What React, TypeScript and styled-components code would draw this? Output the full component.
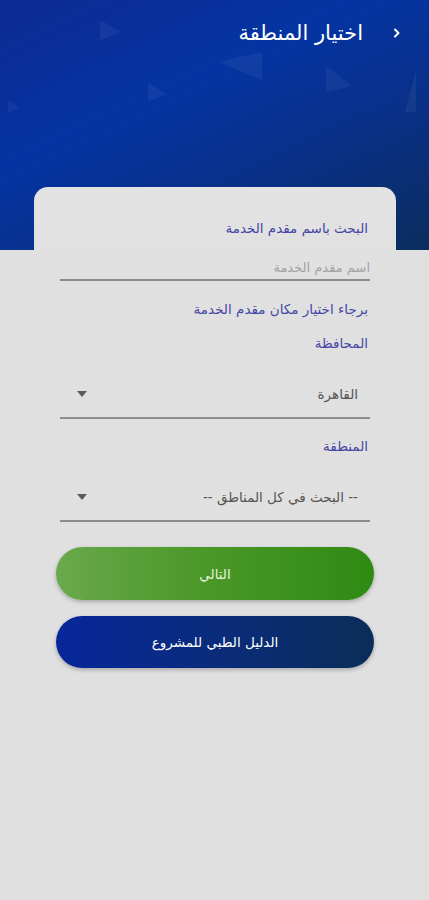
import styled, { createGlobalStyle } from "styled-components";

const GlobalStyle = createGlobalStyle`
  html, body {
    margin: 0;
    padding: 0;
    background: #e0e0e0;
  }
  body {
    font-family: "DejaVu Sans", "Noto Sans", sans-serif;
  }
  * {
    box-sizing: border-box;
  }
`;

const TRIANGLES = [
  "100,20 122,32 100,40",
  "218,62 262,52 262,80",
  "148,82 166,94 148,102",
  "326,66 352,86 326,92",
  "405,112 416,70 416,112",
  "8,100 20,108 8,112",
];

const Caret = () => (
  <svg width="10" height="6" viewBox="0 0 10 6">
    <path d="M0 0h10L5 6z" fill="#5a5a5a" />
  </svg>
);

const App = () => {
  return (
    <Page dir="rtl">
      <GlobalStyle />
      <Hero>
        <Shapes width="429" height="250" viewBox="0 0 429 250">
          {TRIANGLES.map((p) => (
            <polygon key={p} points={p} fill="#ffffff" opacity="0.05" />
          ))}
        </Shapes>
        <TopBar>
          <BackButton>
            <svg width="10" height="12" viewBox="0 0 10 12">
              <path
                d="M3 2.5l3.5 3.5L3 9.5"
                stroke="#fff"
                strokeWidth="2"
                fill="none"
                strokeLinecap="round"
                strokeLinejoin="round"
              />
            </svg>
          </BackButton>
          <Title>اختيار المنطقة</Title>
        </TopBar>
      </Hero>

      <Card>
        <Label>البحث باسم مقدم الخدمة</Label>
        <TextInput placeholder="اسم مقدم الخدمة" />
        <Label $gap={18}>برجاء اختيار مكان مقدم الخدمة</Label>
        <Label $gap={14}>المحافظة</Label>
        <Select>
          <SelectValue>القاهرة</SelectValue>
          <Caret />
        </Select>
        <Label $gap={17}>المنطقة</Label>
        <Select>
          <SelectValue>-- البحث في كل المناطق --</SelectValue>
          <Caret />
        </Select>
        <Button $variant="green" $gap={25}>
          التالي
        </Button>
        <Button $variant="blue" $gap={16}>
          الدليل الطبي للمشروع
        </Button>
      </Card>
    </Page>
  );
};

const Page = styled.div`
  min-height: 100vh;
  display: flex;
  flex-direction: column;
  background: #e0e0e0;
`;

const Hero = styled.header`
  position: relative;
  flex: none;
  height: 250px;
  background: linear-gradient(
    155deg,
    #0c2a93 0%,
    #0534a2 38%,
    #08318e 60%,
    #0b2d5e 100%
  );
  overflow: hidden;
`;

const Shapes = styled.svg`
  position: absolute;
  inset: 0;
`;

const TopBar = styled.div`
  position: relative;
  display: flex;
  align-items: center;
  height: 66px;
  padding: 0 26px 0 0;
`;

const BackButton = styled.span`
  display: flex;
  width: 12px;
  justify-content: center;
  margin-left: 28px;
`;

const Title = styled.h1`
  margin: 0;
  color: #ffffff;
  font-size: 21px;
  font-weight: 400;
`;

const Card = styled.main`
  position: relative;
  flex: 1;
  margin: -63px 33px 0 34px;
  padding: 31px 28px 40px 26px;
  background: linear-gradient(180deg, #e3e3e3 0px, #e0e0e0 90px);
  border-radius: 14px 14px 0 0;
  display: flex;
  flex-direction: column;
`;

const Label = styled.div<{ $gap?: number }>`
  margin-top: ${(p) => p.$gap ?? 0}px;
  color: #4646a6;
  font-size: 13.5px;
  line-height: 20px;
`;

const TextInput = styled.input`
  margin: 19px -2px 0 0;
  height: 24px;
  padding: 0 0 2px;
  border: none;
  border-bottom: 2px solid #8c8c8c;
  background: transparent;
  font-family: inherit;
  font-size: 13px;
  color: #444;
  outline: none;
  &::placeholder {
    color: #a3a3a3;
  }
`;

const Select = styled.div`
  margin: 18px -2px 0 0;
  height: 48px;
  display: flex;
  align-items: center;
  justify-content: space-between;
  padding: 0 12px 0 17px;
  border-bottom: 2px solid #8c8c8c;
`;

const SelectValue = styled.span`
  color: #555555;
  font-size: 13.5px;
`;

const Button = styled.button<{ $variant: "green" | "blue"; $gap: number }>`
  margin: ${(p) => p.$gap}px -6px 0 -4px;
  height: ${(p) => (p.$variant === "green" ? 53 : 52)}px;
  border: none;
  border-radius: 27px;
  font-family: inherit;
  font-size: 13.5px;
  color: ${(p) => (p.$variant === "green" ? "#e4f1da" : "#ffffff")};
  background: ${(p) =>
    p.$variant === "green"
      ? "linear-gradient(90deg, #6aa94c 0%, #4e9a2c 40%, #2f8a12 100%)"
      : "linear-gradient(90deg, #07279a 0%, #0a2c78 55%, #0b2d58 100%)"};
  box-shadow: 0 2px 4px rgba(0, 0, 0, 0.25);
`;

export default App;
